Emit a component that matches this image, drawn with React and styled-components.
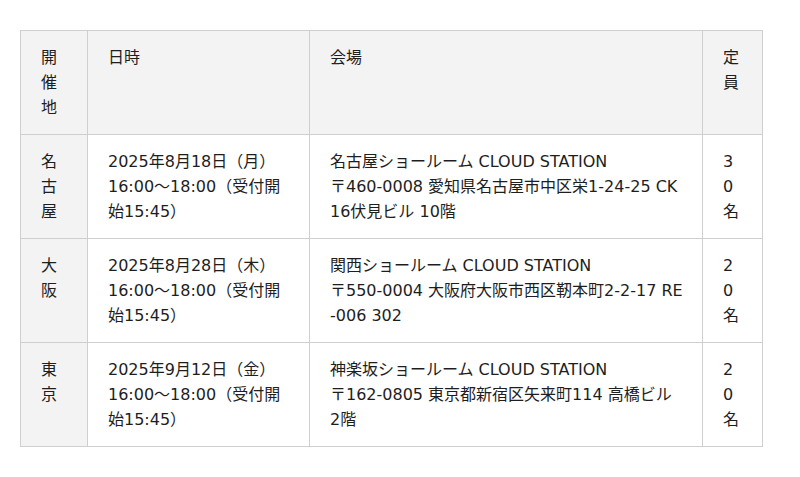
import React from "react";
import styled, { createGlobalStyle } from "styled-components";

const GlobalStyle = createGlobalStyle`
    body {
        margin: 0;
        background: #fff;
        font-family: "DejaVu Sans", "Noto Sans CJK JP", sans-serif;
        color: #1e1e1e;
    }
`;

const Wrapper = styled.div`
    padding: 30px 38px 30px 20px;
`;

const Table = styled.table`
    width: 742px;
    table-layout: fixed;
    border-collapse: collapse;
    font-size: 16px;
    line-height: 25px;
`;

const Th = styled.th`
    background: #f3f3f3;
    border: 1px solid #cfcfcf;
    padding: 14px 20px;
    text-align: left;
    vertical-align: top;
    font-weight: normal;
    word-break: break-all;
`;

const Td = styled.td`
    border: 1px solid #cfcfcf;
    padding: 14px ${props => (props.$wide ? "17px" : "20px")} 14px 20px;
    vertical-align: top;
    word-break: break-all;
`;

const events = [
    {
        place: "名古屋",
        date: "2025年8月18日（月）",
        time: "16:00〜18:00（受付開始15:45）",
        venue: "名古屋ショールーム CLOUD STATION",
        address: "〒460-0008 愛知県名古屋市中区栄1-24-25 CK16伏見ビル 10階",
        cap: "30名",
    },
    {
        place: "大阪",
        date: "2025年8月28日（木）",
        time: "16:00〜18:00（受付開始15:45）",
        venue: "関西ショールーム CLOUD STATION",
        address: "〒550-0004 大阪府大阪市西区靭本町2-2-17 RE-006 302",
        cap: "20名",
    },
    {
        place: "東京",
        date: "2025年9月12日（金）",
        time: "16:00〜18:00（受付開始15:45）",
        venue: "神楽坂ショールーム CLOUD STATION",
        address: "〒162-0805 東京都新宿区矢来町114 高橋ビル 2階",
        cap: "20名",
    },
];

const App = () => (
    <Wrapper>
        <GlobalStyle />
        <Table>
            <colgroup>
                <col style={{ width: 67 }} />
                <col style={{ width: 222 }} />
                <col style={{ width: 393 }} />
                <col style={{ width: 60 }} />
            </colgroup>
            <thead>
                <tr>
                    <Th>開催地</Th>
                    <Th>日時</Th>
                    <Th>会場</Th>
                    <Th>定員</Th>
                </tr>
            </thead>
            <tbody>
                {events.map(e => (
                    <tr key={e.place}>
                        <Th>{e.place}</Th>
                        <Td>
                            {e.date}
                            <br />
                            {e.time}
                        </Td>
                        <Td $wide>
                            {e.venue}
                            <br />
                            {e.address}
                        </Td>
                        <Td>{e.cap}</Td>
                    </tr>
                ))}
            </tbody>
        </Table>
    </Wrapper>
);

export default App;
